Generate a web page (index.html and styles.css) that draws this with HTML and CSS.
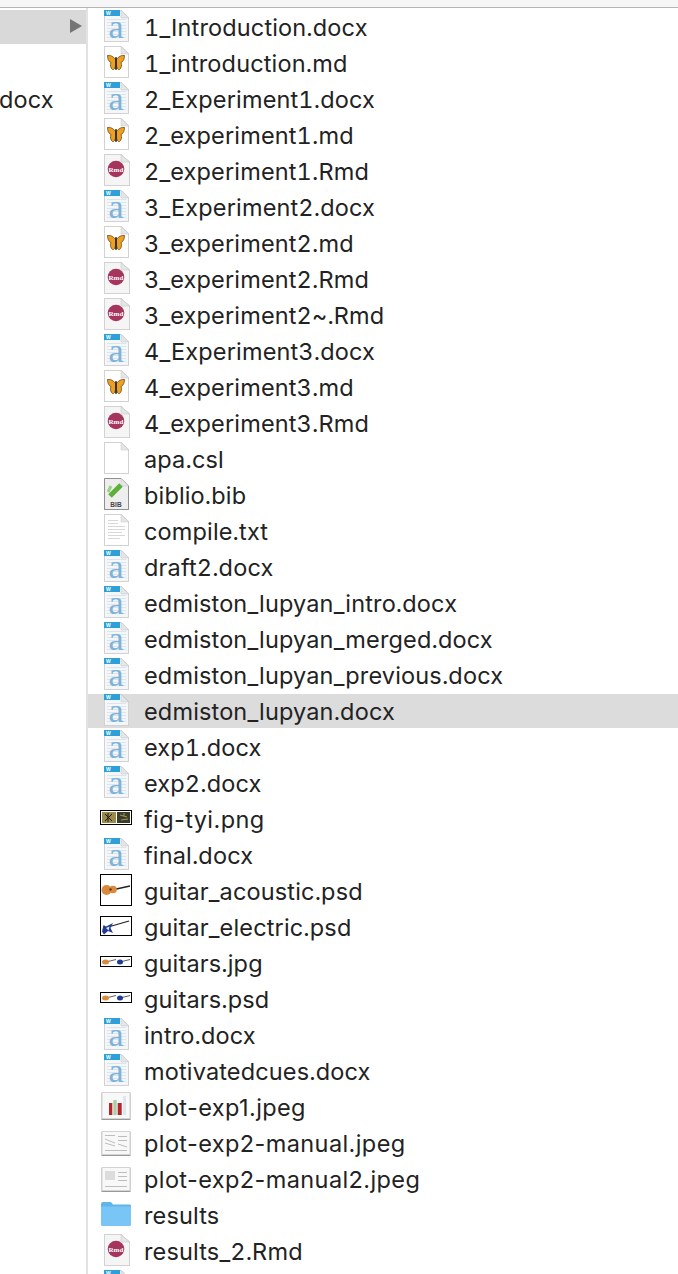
FILE: index.html
```html
<!DOCTYPE html>
<html lang="en">
<head>
    <meta charset="UTF-8">
    <title>Finder</title>
    <link rel="stylesheet" href="styles.css">
</head>
<body>
    <svg class="defs" width="0" height="0">
        <symbol id="page" viewBox="0 0 34 34">
            <path class="page" d="M4.500 .5H21L28.500 8V31.500H4.500Z"/>
            <path class="fold" d="M21 .5V8H28.500Z"/>
        </symbol>
        <symbol id="word" viewBox="0 0 34 34">
            <path class="page word-page" d="M4.500 .5H21L28.500 8V31.500H4.500Z"/>
            <path class="word-bar" d="M4 0H20V6H4Z"/>
            <path class="fold" d="M21 .5V8H28.500Z"/>
            <path class="word-lines" d="M7 9.500H26M7 12.500H26M7 15.500H26M7 18.500H26M7 21.500H26M7 24.500H26M7 27.500H26"/>
            <text class="word-w" x="6" y="5">W</text>
            <text class="word-a" x="16" y="27.500">a</text>
        </symbol>
        <symbol id="md" viewBox="0 0 34 34">
            <use href="#page" width="34" height="34"/>
            <path class="wing" d="M15.500 13.500C13.500 10.500 10.500 9 7.500 9.500 7.500 12.500 8.500 15.500 11 16.500 10 18.500 10.500 22.500 12.500 23.500 14.500 24 15.500 21 15.500 18.500Z"/>
            <path class="wing" d="M16.500 13.500C18.500 10.500 21.500 9 24.500 9.500 24.500 12.500 23.500 15.500 21 16.500 22 18.500 21.500 22.500 19.500 23.500 17.500 24 16.500 21 16.500 18.500Z"/>
            <path class="body" d="M16 12V23"/>
        </symbol>
        <symbol id="rmd" viewBox="0 0 34 34">
            <path class="page rmd-page" d="M4.500 .5H21L29.500 8V31.500H4.500Z"/>
            <path class="fold" d="M21 .5V8H29.500Z"/>
            <circle class="rmd-dot" cx="16" cy="15" r="8.300"/>
            <text class="rmd-text" x="16" y="17.500">Rmd</text>
        </symbol>
        <symbol id="bib" viewBox="0 0 34 34">
            <path class="page bib-page" d="M4.500 .5H21L28.500 8V31.500H4.500Z"/>
            <path class="fold" d="M21 .5V8H28.500Z"/>
            <path class="bib-mark" d="M10 18L21 7"/>
            <path class="bib-dot" d="M11 8L8 14"/>
            <text class="bib-text" x="16" y="28.500">BIB</text>
        </symbol>
        <symbol id="txt" viewBox="0 0 34 34">
            <use href="#page" width="34" height="34"/>
            <path class="txt-lines" d="M8 6.500H18M8 9.500H18M8 12.500H25M8 15.500H25M8 18.500H22M8 21.500H25M8 24.500H20"/>
        </symbol>
        <symbol id="fig" viewBox="0 0 34 34">
            <rect class="frame" x=".5" y="8.500" width="31" height="14"/>
            <rect class="fig-a" x="2" y="10" width="14" height="11"/>
            <rect class="fig-b" x="17" y="10" width="13" height="11"/>
            <path class="fig-marks" d="M5 12L12 19M12 12L5 19M8 11V20"/>
            <path class="fig-flecks" d="M20 13L27 15M21 18L28 17M24 11V14"/>
        </symbol>
        <symbol id="acoustic" viewBox="0 0 34 34">
            <rect class="frame" x=".5" y=".5" width="31" height="31"/>
            <path class="neck" d="M14 15.500L30 12"/>
            <circle class="guitar-o" cx="6.500" cy="16" r="5"/>
            <circle class="guitar-o" cx="13" cy="15.500" r="3.800"/>
            <circle class="guitar-hole" cx="10.500" cy="15.500" r="1.200"/>
        </symbol>
        <symbol id="electric" viewBox="0 0 34 34">
            <rect class="frame" x=".5" y="6.500" width="31" height="19"/>
            <path class="neck" d="M10 16.500L29 11"/>
            <path class="guitar-b" d="M2 21.500L3.500 15 6 16.500 13 13 10.500 18 13 23 8 21 4 24.500Z"/>
            <path class="guard" d="M6 18L9.500 16.500 8.500 20.500Z"/>
        </symbol>
        <symbol id="guitars" viewBox="0 0 34 34">
            <rect class="frame" x=".5" y="10.500" width="31" height="10"/>
            <path class="neck-thin" d="M6 16L16 13.500M20 16L30 13.500"/>
            <ellipse class="guitar-o" cx="5.500" cy="16" rx="3.500" ry="2.500"/>
            <ellipse class="guitar-b" cx="20" cy="16" rx="3" ry="2.500"/>
        </symbol>
        <symbol id="plot-bars" viewBox="0 0 34 34">
            <rect class="photo" x="2" y="2.500" width="28" height="26"/>
            <rect class="bar-r" x="9" y="13" width="3.300" height="12"/>
            <rect class="bar-g" x="13.300" y="10" width="3.400" height="15"/>
            <rect class="bar-r" x="17.700" y="13" width="4" height="12"/>
            <rect class="bar-l" x="23" y="6" width="3" height="19"/>
        </symbol>
        <symbol id="plot-lines" viewBox="0 0 34 34">
            <rect class="photo" x="2" y="5.500" width="28" height="23"/>
            <path class="plot-marks" d="M5 9.500H15M5 13L15 17M5 17L15 20M5 24.500H27M18 10.500H27M18 14.500H27M18 18L27 21"/>
        </symbol>
        <symbol id="plot-grey" viewBox="0 0 34 34">
            <rect class="photo" x="2" y="5.500" width="28" height="23"/>
            <rect class="plot-block" x="5" y="9" width="10" height="9"/>
            <path class="plot-marks" d="M5 24.500H27M18 10.500H27M18 14.500H27M18 18.500H27"/>
        </symbol>
        <symbol id="folder" viewBox="0 0 34 34">
            <path class="folder-back" d="M1 6Q1 4 3 4H11L13 6.500H30Q31 6.500 31 8V12H1Z"/>
            <path class="folder-front" d="M1 8.500H31V26.500Q31 28 29.500 28H2.500Q1 28 1 26.500Z"/>
        </symbol>
    </svg>

    <div class="toolbar"></div>
    <div class="browser">
        <div class="parent-col">
            <div class="parent-row current"><span class="arrow"></span></div>
            <div class="parent-row"></div>
            <div class="parent-row"><span class="clipped">docx</span></div>
        </div>
        <ul class="file-list">
            <li class="file"><svg class="icon"><use href="#word"/></svg>1_Introduction.docx</li>
            <li class="file"><svg class="icon"><use href="#md"/></svg>1_introduction.md</li>
            <li class="file"><svg class="icon"><use href="#word"/></svg>2_Experiment1.docx</li>
            <li class="file"><svg class="icon"><use href="#md"/></svg>2_experiment1.md</li>
            <li class="file"><svg class="icon"><use href="#rmd"/></svg>2_experiment1.Rmd</li>
            <li class="file"><svg class="icon"><use href="#word"/></svg>3_Experiment2.docx</li>
            <li class="file"><svg class="icon"><use href="#md"/></svg>3_experiment2.md</li>
            <li class="file"><svg class="icon"><use href="#rmd"/></svg>3_experiment2.Rmd</li>
            <li class="file"><svg class="icon"><use href="#rmd"/></svg>3_experiment2~.Rmd</li>
            <li class="file"><svg class="icon"><use href="#word"/></svg>4_Experiment3.docx</li>
            <li class="file"><svg class="icon"><use href="#md"/></svg>4_experiment3.md</li>
            <li class="file"><svg class="icon"><use href="#rmd"/></svg>4_experiment3.Rmd</li>
            <li class="file"><svg class="icon"><use href="#page"/></svg>apa.csl</li>
            <li class="file"><svg class="icon"><use href="#bib"/></svg>biblio.bib</li>
            <li class="file"><svg class="icon"><use href="#txt"/></svg>compile.txt</li>
            <li class="file"><svg class="icon"><use href="#word"/></svg>draft2.docx</li>
            <li class="file"><svg class="icon"><use href="#word"/></svg>edmiston_lupyan_intro.docx</li>
            <li class="file"><svg class="icon"><use href="#word"/></svg>edmiston_lupyan_merged.docx</li>
            <li class="file"><svg class="icon"><use href="#word"/></svg>edmiston_lupyan_previous.docx</li>
            <li class="file selected"><svg class="icon"><use href="#word"/></svg>edmiston_lupyan.docx</li>
            <li class="file"><svg class="icon"><use href="#word"/></svg>exp1.docx</li>
            <li class="file"><svg class="icon"><use href="#word"/></svg>exp2.docx</li>
            <li class="file hyphened"><svg class="icon"><use href="#fig"/></svg>fig-tyi.png</li>
            <li class="file"><svg class="icon"><use href="#word"/></svg>final.docx</li>
            <li class="file"><svg class="icon"><use href="#acoustic"/></svg>guitar_acoustic.psd</li>
            <li class="file"><svg class="icon"><use href="#electric"/></svg>guitar_electric.psd</li>
            <li class="file"><svg class="icon"><use href="#guitars"/></svg>guitars.jpg</li>
            <li class="file"><svg class="icon"><use href="#guitars"/></svg>guitars.psd</li>
            <li class="file"><svg class="icon"><use href="#word"/></svg>intro.docx</li>
            <li class="file"><svg class="icon"><use href="#word"/></svg>motivatedcues.docx</li>
            <li class="file hyphened"><svg class="icon"><use href="#plot-bars"/></svg>plot-exp1.jpeg</li>
            <li class="file hyphened"><svg class="icon"><use href="#plot-lines"/></svg>plot-exp2-manual.jpeg</li>
            <li class="file hyphened"><svg class="icon"><use href="#plot-grey"/></svg>plot-exp2-manual2.jpeg</li>
            <li class="file"><svg class="icon"><use href="#folder"/></svg>results</li>
            <li class="file"><svg class="icon"><use href="#rmd"/></svg>results_2.Rmd</li>
            <li class="file"><svg class="icon"><use href="#word"/></svg></li>
        </ul>
    </div>
</body>
</html>
```

FILE: styles.css
```css
html, body {
    margin: 0;
    height: 1274px;
    overflow: hidden;
    background: #fff;
}
body {
    font-family: Inter, "Liberation Sans", sans-serif;
    font-size: 23.5px;
    font-variant-numeric: tabular-nums;
    letter-spacing: .15px;
    color: #222;
    display: flex;
    flex-direction: column;
}
.defs { display: none; }
.toolbar {
    height: 7px;
    flex: none;
    background: #f6f6f6;
    border-bottom: 1px solid #b5b5b5;
}
.browser {
    display: flex;
    flex: 1;
    min-height: 0;
    padding-top: 2px;
}
.parent-col {
    width: 86px;
    flex: none;
    display: flex;
    flex-direction: column;
    gap: 2px;
}
.parent-row {
    height: 34px;
    display: flex;
    align-items: center;
    overflow: hidden;
}
.parent-row.current {
    background: #d9d9d9;
    justify-content: flex-end;
    padding-right: 4px;
}
.arrow {
    width: 0;
    height: 0;
    margin-bottom: 3px;
    border-left: 12px solid #757575;
    border-top: 7.5px solid transparent;
    border-bottom: 7.5px solid transparent;
}
.clipped { margin-left: -1px; }
.file-list {
    list-style: none;
    flex: 1;
    margin: -2px 0 0;
    padding: 2px 0 0;
    display: flex;
    flex-direction: column;
    gap: 2px;
    border-left: 2px solid #e2e2e2;
}
.file {
    height: 34px;
    box-sizing: border-box;
    flex: none;
    display: flex;
    align-items: center;
    gap: 10px;
    padding: 1px 0 0 12px;
    white-space: nowrap;
}
.file.selected { background: #dcdcdc; }
.file.hyphened {
    font-variant-numeric: normal;
    letter-spacing: .4px;
}
.icon {
    width: 34px;
    height: 34px;
    flex: none;
    margin-top: -1px;
}

/* file icons */
.page {
    fill: #fff;
    stroke: #d2d2d2;
    filter: drop-shadow(0 .6px .4px rgba(0, 0, 0, .3));
}
.word-page { fill: #f3f7fa; }
.rmd-page { fill: #f5f5f5; }
.bib-page { fill: #eee; stroke: #8f8f8f; }
.fold {
    fill: #e6e6e6;
    stroke: #c4c4c4;
    stroke-width: .5;
}
.word-bar { fill: #2f9fd8; }
.word-lines {
    stroke: #dde5ea;
    stroke-width: 1;
}
.word-w {
    font: 700 5px "Liberation Sans", sans-serif;
    fill: #fff;
}
.word-a {
    font: 34px "Liberation Serif", serif;
    fill: #7fb2d9;
    text-anchor: middle;
}
.wing { fill: #efa021; stroke: #6b4a12; stroke-width: .8; }
.body { stroke: #2b2b2b; stroke-width: 1.8; stroke-linecap: round; }
.rmd-dot { fill: #a5355c; }
.rmd-text {
    font: 700 7px "Liberation Serif", serif;
    fill: #fff;
    text-anchor: middle;
}
.bib-mark { fill: none; stroke: #5fb03a; stroke-width: 5; }
.bib-dot { stroke: #9ad27e; stroke-width: 3; }
.bib-text {
    font: 700 6.5px "Liberation Sans", sans-serif;
    fill: #444;
    text-anchor: middle;
}
.txt-lines { stroke: #d8d8d8; stroke-width: 1; }
.frame { fill: #fff; stroke: #000; }
.fig-a { fill: #9b8a4a; }
.fig-b { fill: #3c3c2a; }
.fig-marks { stroke: #1b1b12; stroke-width: 1; fill: none; }
.fig-flecks { stroke: #a09a5a; stroke-width: 1; fill: none; }
.neck { stroke: #222; stroke-width: 1.3; fill: none; }
.neck-thin { stroke: #333; stroke-width: .8; fill: none; }
.guitar-o { fill: #d98a3c; }
.guitar-hole { fill: #6a3a15; }
.guitar-b { fill: #1f3c94; }
.guard { fill: #e8e8f0; }
.photo {
    fill: #f8f8f8;
    stroke: #d4d4d4;
    filter: drop-shadow(0 1px .6px rgba(0, 0, 0, .4));
}
.bar-r { fill: #b8232c; }
.bar-g { fill: #a9cfa5; }
.bar-l { fill: #dfe6ee; }
.plot-marks { stroke: #bdbdbd; stroke-width: 1; fill: none; }
.plot-block { fill: #dcdcdc; }
.folder-back { fill: #5fb4ea; }
.folder-front { fill: #78c5f6; }
```
